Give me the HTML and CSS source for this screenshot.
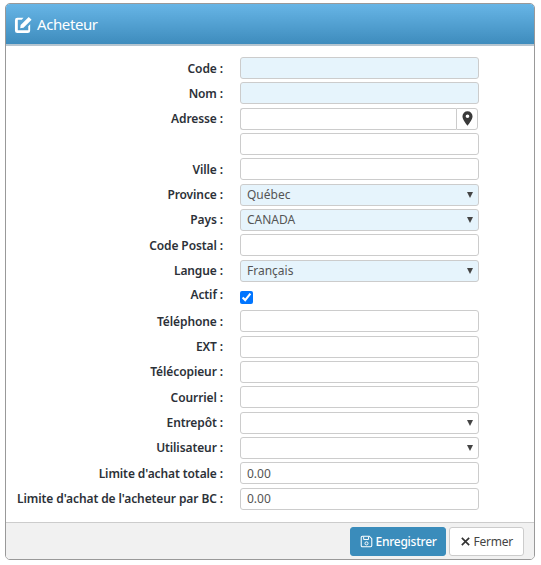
FILE: index.html
```html
<!DOCTYPE html>
<html lang="fr">
<head>
    <meta charset="UTF-8">
    <title>Acheteur</title>
    <link rel="stylesheet" href="styles.css">
</head>
<body>
    <div class="modal">
        <div class="modal-header">
            <svg class="header-icon" viewBox="0 0 20 20" width="19" height="19">
                <path d="M3.5 3H10L8.2 5H4v11h11v-4.2l2-2V16.5A2.5 2.5 0 0 1 14.500 19h-11A2.500 2.500 0 0 1 1 16.500v-11A2.500 2.500 0 0 1 3.500 3z" fill="#fff"/>
                <path d="M7 10.500 15.500 2l3 3L10 13.500l-3.500.5z" fill="#fff"/>
            </svg>
            <span>Acheteur</span>
        </div>
        <form class="modal-body">
            <div class="row"><label>Code :</label><input type="text" class="field required"></div>
            <div class="row"><label>Nom :</label><input type="text" class="field required"></div>
            <div class="row">
                <label>Adresse :</label>
                <div class="input-group">
                    <input type="text" class="field">
                    <span class="addon">
                        <svg viewBox="0 0 12 16" width="11" height="15">
                            <path fill-rule="evenodd" d="M6 0a5.500 5.500 0 0 1 5.500 5.500C11.500 9 8 13 6 16 4 13 .5 9 .5 5.500A5.500 5.500 0 0 1 6 0zm0 3.500a2 2 0 1 0 0 4 2 2 0 0 0 0-4z" fill="#3a3a3a"/>
                        </svg>
                    </span>
                </div>
            </div>
            <div class="row"><label></label><input type="text" class="field"></div>
            <div class="row"><label>Ville :</label><input type="text" class="field"></div>
            <div class="row">
                <label>Province :</label>
                <select class="field required"><option>Québec</option></select>
            </div>
            <div class="row">
                <label>Pays :</label>
                <select class="field required"><option>CANADA</option></select>
            </div>
            <div class="row"><label>Code Postal :</label><input type="text" class="field"></div>
            <div class="row">
                <label>Langue :</label>
                <select class="field required"><option>Français</option></select>
            </div>
            <div class="row">
                <label class="label-check">Actif :</label>
                <input type="checkbox" class="check" checked>
            </div>
            <div class="row"><label>Téléphone :</label><input type="text" class="field"></div>
            <div class="row"><label>EXT :</label><input type="text" class="field"></div>
            <div class="row"><label>Télécopieur :</label><input type="text" class="field"></div>
            <div class="row"><label>Courriel :</label><input type="text" class="field"></div>
            <div class="row">
                <label>Entrepôt :</label>
                <select class="field"><option></option></select>
            </div>
            <div class="row">
                <label>Utilisateur :</label>
                <select class="field"><option></option></select>
            </div>
            <div class="row"><label>Limite d'achat totale :</label><input type="text" class="field" value="0.00"></div>
            <div class="row"><label>Limite d'achat de l'acheteur par BC :</label><input type="text" class="field" value="0.00"></div>
        </form>
        <div class="modal-footer">
            <button type="button" class="btn btn-primary">
                <svg viewBox="0 0 16 16" width="13" height="13">
                    <path d="M3 1.500h8.500L14.500 4.500V13a1.500 1.500 0 0 1-1.500 1.500H3A1.500 1.500 0 0 1 1.500 13V3A1.500 1.500 0 0 1 3 1.500z" fill="none" stroke="#fff" stroke-width="1.300"/>
                    <path d="M4.500 2v3.500h6V2" fill="none" stroke="#fff" stroke-width="1.200"/>
                    <circle cx="8" cy="10.300" r="1.900" fill="none" stroke="#fff" stroke-width="1.200"/>
                </svg>
                Enregistrer
            </button>
            <button type="button" class="btn btn-default">
                <svg viewBox="0 0 12 12" width="11" height="11">
                    <path d="M2 2l8 8M10 2l-8 8" stroke="#333" stroke-width="1.800" fill="none"/>
                </svg>
                Fermer
            </button>
        </div>
    </div>
</body>
</html>
```

FILE: styles.css
```css
* {
    box-sizing: border-box;
}
body {
    margin: 0;
    padding: 3px 6px 5px 5px;
    background: #fff;
    font-family: "Noto Sans", "Open Sans", sans-serif;
    font-size: 12px;
    color: #333;
}
.modal {
    height: 557px;
    display: flex;
    flex-direction: column;
    border: 1px solid #999;
    border-radius: 5px;
    overflow: hidden;
}
.modal-header {
    height: 42px;
    flex-shrink: 0;
    display: flex;
    align-items: center;
    gap: 4px;
    padding-left: 8px;
    background: linear-gradient(to bottom, #67b5e6, #3e8cbd);
    border-bottom: 2px solid #b5c5d0;
    color: #fff;
    font-size: 15px;
    letter-spacing: -0.4px;
}
.modal-body {
    flex: 1;
    display: flex;
    flex-direction: column;
    gap: 3.33px;
    padding-top: 11px;
}
.row {
    height: 22px;
    display: flex;
    align-items: center;
}
.row label {
    width: 217px;
    text-align: right;
    font-weight: 600;
    letter-spacing: -0.1px;
    white-space: nowrap;
    margin-right: 17px;
    color: #2c3138;
}
.row .label-check {
    margin-top: -2px;
}
.field {
    width: 239px;
    height: 22px;
    padding: 0 6px;
    border: 1px solid #ccc;
    border-radius: 3px;
    background-color: #fff;
    font-family: inherit;
    font-size: 12px;
    color: #555;
    outline: none;
}
.required {
    background-color: #e6f4fc;
}
select.field {
    appearance: none;
    background-image: url("data:image/svg+xml,%3Csvg xmlns='http://www.w3.org/2000/svg' width='6' height='6'%3E%3Cpath d='M0 0h6L3 6z' fill='%23444'/%3E%3C/svg%3E");
    background-repeat: no-repeat;
    background-position: right 5px center;
}
.input-group {
    width: 238px;
    display: flex;
}
.input-group .field {
    flex: 1;
    width: auto;
    border-radius: 3px 0 0 3px;
    border-right: none;
}
.addon {
    width: 22px;
    height: 22px;
    display: flex;
    align-items: center;
    justify-content: center;
    border: 1px solid #ccc;
    border-radius: 0 3px 3px 0;
}
.check {
    width: 13px;
    height: 13px;
    margin: 4px 0 0 0;
}
.modal-footer {
    height: 37px;
    flex-shrink: 0;
    display: flex;
    justify-content: flex-end;
    align-items: center;
    gap: 3px;
    padding-right: 10px;
    background: #f1f1f1;
    border-top: 1px solid #ccc;
}
.btn {
    height: 29px;
    display: flex;
    align-items: center;
    gap: 3px;
    padding: 0 8px 0 9px;
    border-radius: 3px;
    font-family: inherit;
    font-size: 12px;
    letter-spacing: -0.25px;
    cursor: pointer;
}
.btn-primary {
    border: 1px solid #3a8cbb;
    background: #3a8cbb;
    color: #fff;
    font-weight: 500;
}
.btn-default {
    border: 1px solid #ccc;
    background: #fff;
    color: #444;
    padding: 0 10px;
}
```
